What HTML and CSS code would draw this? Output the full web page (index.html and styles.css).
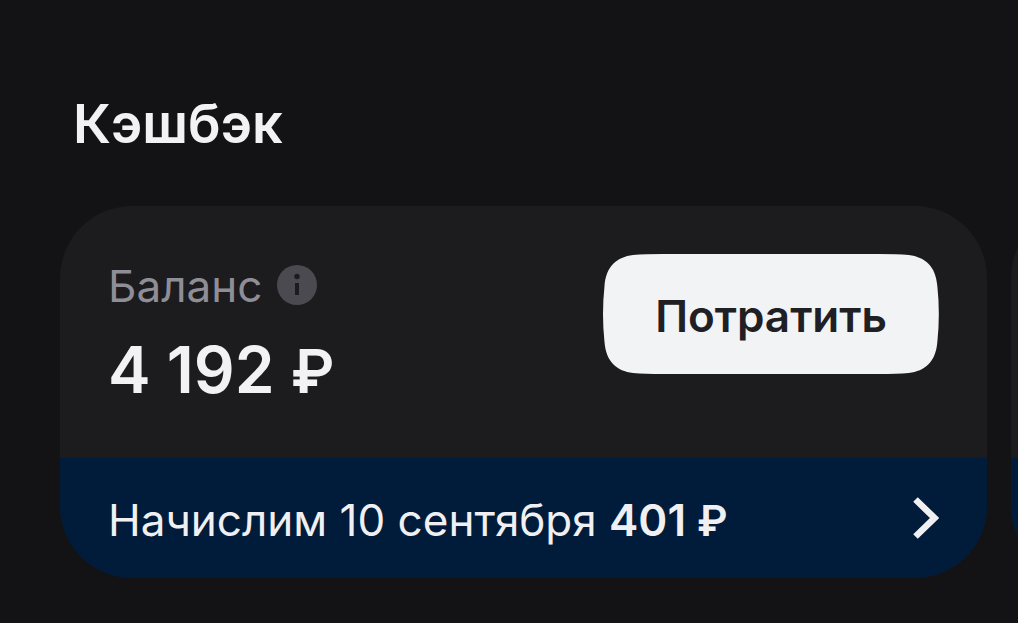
FILE: index.html
```html
<!DOCTYPE html>
<html lang="ru">
<head>
<meta charset="utf-8">
<meta name="viewport" content="width=device-width, initial-scale=1">
<title>Кэшбэк</title>
<link rel="stylesheet" href="styles.css">
</head>
<body>
<main class="cashback">
  <h1 class="title">Кэшбэк</h1>
  <div class="carousel">
    <article class="card">
      <div class="card-top">
        <div class="balance">
          <div class="balance-label">
            <span>Баланс</span>
            <button class="info" type="button" aria-label="О балансе">
              <svg width="40" height="40" viewBox="0 0 40 40" aria-hidden="true">
                <circle cx="20" cy="20" r="20" fill="#4b4a50"/>
                <circle cx="20" cy="11.5" r="2.7" fill="#1c1c1e"/>
                <rect x="18" y="18" width="4" height="12" fill="#1c1c1e"/>
              </svg>
            </button>
          </div>
          <div class="amount">4&nbsp;192&nbsp;<span class="ruble">₽</span></div>
        </div>
        <button class="spend" type="button">
          <svg class="spend-shape" viewBox="0 0 336 120" preserveAspectRatio="none" aria-hidden="true">
            <path d="M60 0H276Q294 0 306 1C322 3 333 12 334.500 32Q336 46 336 60T334.500 88C333 108 322 117 306 119Q294 120 276 120H60Q42 120 30 119C14 117 3 108 1.500 88Q0 74 0 60T1.500 32C3 12 14 3 30 1Q42 0 60 0Z" fill="#f2f3f5"/>
          </svg>
          <span class="spend-text">Потратить</span>
        </button>
      </div>
      <a class="accrual" href="#accrual">
        <span>Начислим 10 сентября <strong>401&nbsp;<span class="ruble">₽</span></strong></span>
        <svg class="chevron" width="26" height="42" viewBox="0 0 26 42" aria-hidden="true">
          <path d="M2.500 2.500L21.500 21L2.500 39.500" fill="none" stroke="#f0f0f3" stroke-width="6.500"/>
        </svg>
      </a>
    </article>
    <article class="card" aria-hidden="true">
      <div class="card-top"></div>
      <div class="accrual"></div>
    </article>
  </div>
</main>
</body>
</html>
```

FILE: styles.css
```css
* {
  box-sizing: border-box;
}

body {
  margin: 0;
  background: #131315;
  color: #f2f2f4;
  font-family: Inter, "Liberation Sans", sans-serif;
}

.cashback {
  padding: 92px 0 45px;
  overflow: hidden;
}

.title {
  margin: 0 0 50px;
  padding: 0 73px;
  font-size: 54px;
  line-height: 64px;
  font-weight: 600;
}

.carousel {
  display: flex;
  gap: 24px;
  padding-left: 60px;
}

.card {
  display: flex;
  flex-direction: column;
  flex: 0 0 calc(100% - 31px);
  border-radius: 72px;
  overflow: hidden;
  background: #1c1c1e;
}

.card-top {
  display: flex;
  flex: 1;
  justify-content: space-between;
  align-items: flex-start;
  padding: 48px;
}

.balance-label {
  display: flex;
  align-items: center;
  gap: 15px;
  margin-bottom: 12px;
  color: #8f8e97;
  font-size: 44px;
  line-height: 64px;
}

.info {
  display: block;
  padding: 0 0 2px;
  border: 0;
  background: none;
}

.info svg {
  display: block;
}

.amount {
  font-size: 64px;
  line-height: 80px;
  font-weight: 600;
}

.ruble {
  font-size: 60px;
  line-height: 1;
}

.spend {
  position: relative;
  padding: 30px 52px 26px;
  border: 0;
  background: none;
  color: #202024;
  font: 600 44px/64px Inter, "Liberation Sans", sans-serif;
}

.spend-shape {
  position: absolute;
  inset: 0;
  width: 100%;
  height: 100%;
}

.spend-text {
  position: relative;
}

.accrual {
  display: flex;
  justify-content: space-between;
  align-items: center;
  min-height: 120px;
  padding: 30px 48px 26px;
  background: #001c3a;
  color: #f0f0f3;
  font-size: 44px;
  line-height: 64px;
  text-decoration: none;
}

.accrual strong {
  font-weight: 600;
}

.accrual .ruble {
  font-size: 42px;
}

.chevron {
  margin-bottom: 4px;
}
```
